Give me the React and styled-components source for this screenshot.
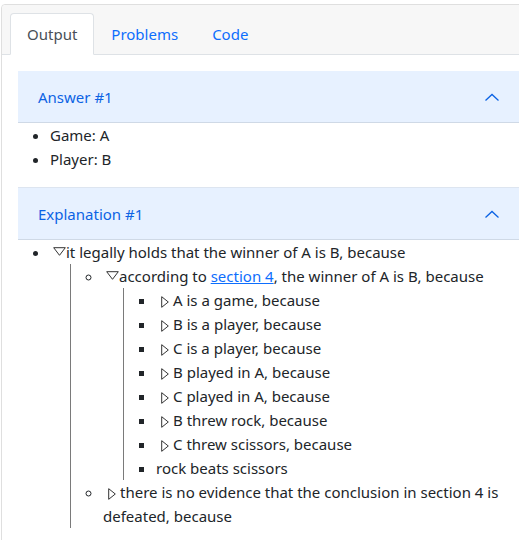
import React from "react";
import styled, { createGlobalStyle } from "styled-components";

const GlobalStyle = createGlobalStyle`
  html, body {
    margin: 0;
    overflow: hidden;
    background: #fff;
  }
  body {
    font-family: "Noto Sans", "Open Sans", sans-serif;
    font-size: 15px;
    line-height: 24px;
    color: #212529;
  }
`;

const Page = styled.div`
  padding: 4px 0 0 1px;
`;

const Card = styled.div`
  width: 534px;
  border: 1px solid #dfdfdf;
  border-radius: 4px;
  background: #fff;
`;

const TabBar = styled.div`
  display: flex;
  padding: 8px 8px 0;
  background: #f7f7f7;
  border-bottom: 1px solid #dee2e6;
  border-radius: 4px 4px 0 0;
`;

const Tab = styled.div`
  padding: 8px 16px;
  margin-bottom: -1px;
  border: 1px solid ${(p) => (p.$active ? "#dee2e6" : "transparent")};
  border-bottom-color: ${(p) => (p.$active ? "#fff" : "transparent")};
  border-radius: 4px 4px 0 0;
  background: ${(p) => (p.$active ? "#fff" : "transparent")};
  color: ${(p) => (p.$active ? "#495057" : "#0d6efd")};
`;

const Body = styled.div`
  padding: 16px;
`;

const Header = styled.div`
  display: flex;
  align-items: center;
  justify-content: space-between;
  height: ${(p) => (p.$first ? "52px" : "53px")};
  box-sizing: border-box;
  padding: 0 20px;
  background: #e7f1ff;
  color: #0c63e4;
  border-top: ${(p) => (p.$first ? "none" : "1px solid #dde5f0")};
  border-bottom: 1px solid #cfd9e6;
`;

const List = styled.ul`
  margin: 0 0 16px;
  padding-left: 32px;
`;

const SubList = styled.ul`
  margin: 0 0 0 20px;
  padding-left: 32px;
  border-left: 1px solid #7a7a7a;
`;

const Toggle = styled.span`
  display: inline-block;
  width: 16px;
  text-align: ${(p) => (p.$open ? "right" : "center")};
  padding-left: ${(p) => (p.$open ? "0" : "1px")};
  svg {
    vertical-align: ${(p) => (p.$open ? "2px" : "-2px")};
  }
`;

const Ref = styled.a`
  color: #0d6efd;
  text-decoration: underline;
`;

const Chevron = () => (
  <svg width="16" height="16" viewBox="0 0 16 16">
    <path d="M1.5 11.5 L8 5.5 L14.5 11.5" fill="none" stroke="#0c63e4" strokeWidth="1.3" />
  </svg>
);

const Mark = ({ open }) => (
  <Toggle $open={open}>
    {open ? (
      <svg width="13" height="9" viewBox="0 0 13 9">
        <polygon points="0.7,0.7 12.3,0.7 6.5,8.3" fill="none" stroke="#333" strokeWidth="1" />
      </svg>
    ) : (
      <svg width="8" height="12" viewBox="0 0 8 12">
        <polygon points="0.7,0.7 7.3,6 0.7,11.3" fill="none" stroke="#333" strokeWidth="1" />
      </svg>
    )}
  </Toggle>
);

const facts = [
  "A is a game, because",
  "B is a player, because",
  "C is a player, because",
  "B played in A, because",
  "C played in A, because",
  "B threw rock, because",
  "C threw scissors, because",
];

export default function App() {
  return (
    <Page>
      <GlobalStyle />
      <Card>
        <TabBar>
          <Tab $active>Output</Tab>
          <Tab>Problems</Tab>
          <Tab>Code</Tab>
        </TabBar>
        <Body>
          <Header $first>
            <span>Answer #1</span>
            <Chevron />
          </Header>
          <List>
            <li>Game: A</li>
            <li>Player: B</li>
          </List>
          <Header>
            <span>Explanation #1</span>
            <Chevron />
          </Header>
          <List>
            <li>
              <Mark open />it legally holds that the winner of A is B, because
              <SubList>
                <li>
                  <Mark open />according to <Ref href="#">section 4</Ref>, the winner of A is B, because
                  <SubList>
                    {facts.map((f) => (
                      <li key={f}>
                        <Mark />
                        {f}
                      </li>
                    ))}
                    <li>rock beats scissors</li>
                  </SubList>
                </li>
                <li>
                  <Mark />there is no evidence that the conclusion in section 4 is defeated, because
                </li>
              </SubList>
            </li>
          </List>
        </Body>
      </Card>
    </Page>
  );
}
